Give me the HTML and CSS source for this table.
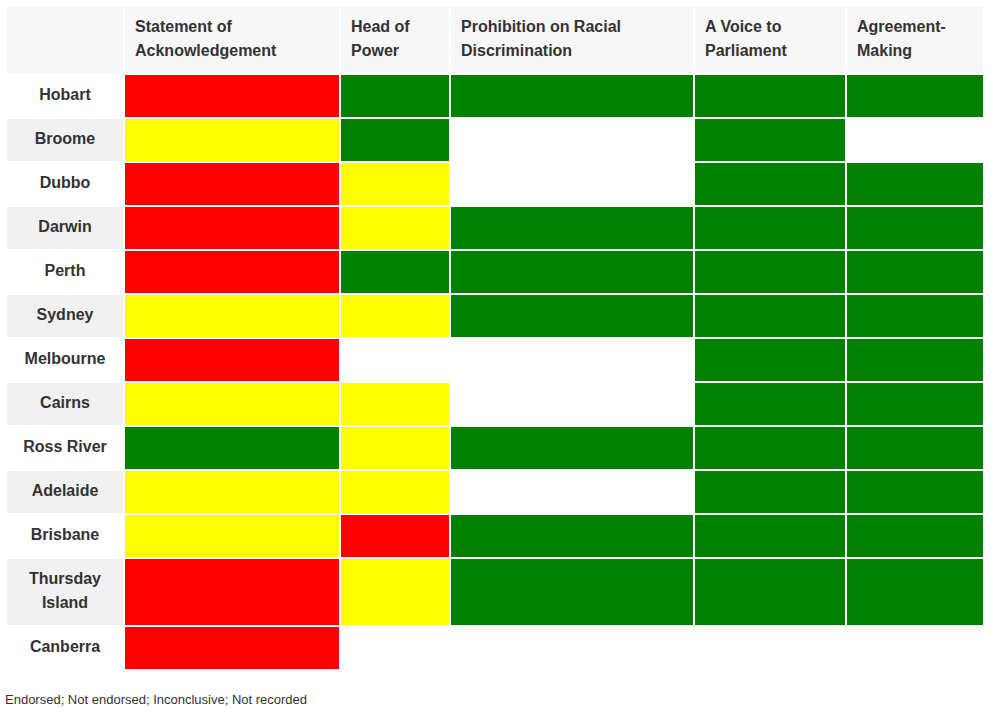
FILE: index.html
```html
<!DOCTYPE html>
<html>
<head>
<meta charset="utf-8">
<link rel="stylesheet" href="styles.css">
</head>
<body>
<div class="wrap">
<table class="grid">
  <colgroup>
    <col class="c-city"><col class="c-soa"><col class="c-hop"><col class="c-prd"><col class="c-vtp"><col class="c-am">
  </colgroup>
  <thead>
    <tr>
      <th class="blank"></th>
      <th>Statement of Acknowledgement</th>
      <th>Head of Power</th>
      <th>Prohibition on Racial Discrimination</th>
      <th>A Voice to Parliament</th>
      <th>Agreement-Making</th>
    </tr>
  </thead>
  <tbody>
    <tr><th class="city">Hobart</th><td class="r"></td><td class="g"></td><td class="g"></td><td class="g"></td><td class="g"></td></tr>
    <tr class="alt"><th class="city">Broome</th><td class="y"></td><td class="g"></td><td></td><td class="g"></td><td></td></tr>
    <tr><th class="city">Dubbo</th><td class="r"></td><td class="y"></td><td></td><td class="g"></td><td class="g"></td></tr>
    <tr class="alt"><th class="city">Darwin</th><td class="r"></td><td class="y"></td><td class="g"></td><td class="g"></td><td class="g"></td></tr>
    <tr><th class="city">Perth</th><td class="r"></td><td class="g"></td><td class="g"></td><td class="g"></td><td class="g"></td></tr>
    <tr class="alt"><th class="city">Sydney</th><td class="y"></td><td class="y"></td><td class="g"></td><td class="g"></td><td class="g"></td></tr>
    <tr><th class="city">Melbourne</th><td class="r"></td><td></td><td></td><td class="g"></td><td class="g"></td></tr>
    <tr class="alt"><th class="city">Cairns</th><td class="y"></td><td class="y"></td><td></td><td class="g"></td><td class="g"></td></tr>
    <tr><th class="city">Ross River</th><td class="g"></td><td class="y"></td><td class="g"></td><td class="g"></td><td class="g"></td></tr>
    <tr class="alt"><th class="city">Adelaide</th><td class="y"></td><td class="y"></td><td></td><td class="g"></td><td class="g"></td></tr>
    <tr><th class="city">Brisbane</th><td class="y"></td><td class="r"></td><td class="g"></td><td class="g"></td><td class="g"></td></tr>
    <tr class="alt"><th class="city">Thursday Island</th><td class="r"></td><td class="y"></td><td class="g"></td><td class="g"></td><td class="g"></td></tr>
    <tr><th class="city">Canberra</th><td class="r"></td><td></td><td></td><td></td><td></td></tr>
  </tbody>
</table>
<p class="legend">Endorsed; Not endorsed; Inconclusive; Not recorded</p>
</div>
</body>
</html>
```
FILE: styles.css
```css
html, body {
  margin: 0;
  padding: 0;
  background: #fff;
}
body {
  font-family: "Liberation Sans", Arial, sans-serif;
  color: #333;
}
.wrap {
  padding: 5px;
}
.grid {
  border-collapse: separate;
  border-spacing: 2px;
  table-layout: fixed;
  width: 980px;
}
.c-city { width: 116px; }
.c-soa { width: 214px; }
.c-hop { width: 108px; }
.c-prd { width: 242px; }
.c-vtp { width: 150px; }
.c-am { width: 136px; }
.grid th, .grid td {
  padding: 8px 10px 10px;
  font-size: 16px;
  line-height: 24px;
  vertical-align: middle;
}
.grid thead th {
  background: #f7f7f7;
  text-align: left;
  font-weight: bold;
}
.grid th.city {
  text-align: center;
  font-weight: bold;
  background: #fff;
}
.grid tr.alt th.city {
  background: #f1f1f1;
}
.r { background: #ff0000; }
.g { background: #008000; }
.y { background: #ffff00; }
.legend {
  margin: 21px 0 0;
  font-size: 13px;
  line-height: 15px;
  color: #333;
}
```
